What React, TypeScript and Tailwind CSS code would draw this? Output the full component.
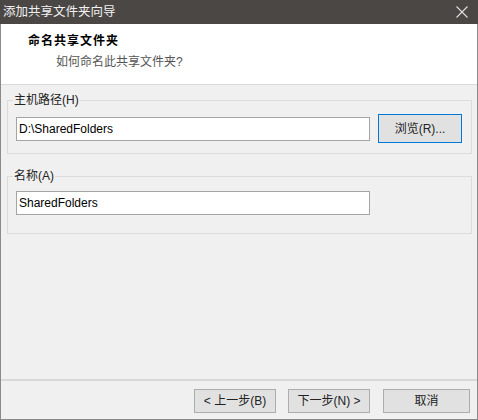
const font = { fontFamily: '"Segoe UI", "Liberation Sans", "Noto Sans CJK SC", sans-serif' };

function Group({ label, children, className = "" }: { label: string; children: React.ReactNode; className?: string }) {
  return (
    <fieldset className={`ml-[6px] w-[465px] border border-[#dcdcdc] ${className}`}>
      <legend className="ml-[5px] h-[14px] px-px text-[12px] leading-[14px] text-[#222]">{label}</legend>
      <div className="pl-[8px]">{children}</div>
    </fieldset>
  );
}

function TextBox({ value }: { value: string }) {
  return (
    <div className="flex h-[24px] w-[354px] items-center border border-[#a5a5a5] bg-white pl-[2px] text-[12px] text-black">
      {value}
    </div>
  );
}

function Btn({ children, className = "" }: { children: React.ReactNode; className?: string }) {
  return (
    <button className={`flex h-[24px] items-center justify-center border border-[#adadad] bg-[#e1e1e1] text-[12px] text-[#222] ${className}`}>
      {children}
    </button>
  );
}

export default function App() {
  return (
    <div style={font} className="flex h-[420px] w-[478px] flex-col border-x border-b border-[#8a8a8a] bg-[#f0f0f0]">
      {/* title bar */}
      <div className="-mx-px flex h-[24px] items-center justify-between bg-[#4a4745] pl-[3px] pr-[10px]">
        <span className="text-[12.5px] text-[#f2f2f2]">添加共享文件夹向导</span>
        <svg width="12" height="12" viewBox="0 0 12 12" stroke="#e0e0e0" strokeWidth="1.1">
          <path d="M0.5 0.5 L11.5 11.5 M11.5 0.5 L0.5 11.5" />
        </svg>
      </div>

      {/* header */}
      <div className="h-[61px] border-b border-[#d9d9d9] bg-white pt-[8px]">
        <div className="pl-[27px] text-[12px] font-bold leading-[18px] tracking-[1px] text-black">命名共享文件夹</div>
        <div className="pl-[55px] pt-[5px] text-[12px] leading-[14px] text-[#555]">如何命名此共享文件夹?</div>
      </div>

      {/* body */}
      <div className="flex-1 pt-[8px]">
        <Group label="主机路径(H)" className="pb-[10px]">
          <div className="flex items-center pt-[7px]">
            <TextBox value="D:\SharedFolders" />
            <button className="ml-[8px] flex h-[29px] w-[84px] items-center justify-center border border-[#0078d7] bg-[#e1e1e1] text-[12px] text-[#222]">
              浏览(R)...
            </button>
          </div>
        </Group>
        <Group label="名称(A)" className="mt-[15px] pb-[18px]">
          <div className="pt-[8px]">
            <TextBox value="SharedFolders" />
          </div>
        </Group>
      </div>

      {/* footer */}
      <div className="flex h-[40px] items-start justify-end border-t-2 border-[#d8d8d8] pr-[7px] pt-[8px]">
        <Btn className="w-[82px]">&lt; 上一步(B)</Btn>
        <Btn className="ml-[12px] w-[82px]">下一步(N) &gt;</Btn>
        <Btn className="ml-[13px] w-[87px]">取消</Btn>
      </div>
    </div>
  );
}
